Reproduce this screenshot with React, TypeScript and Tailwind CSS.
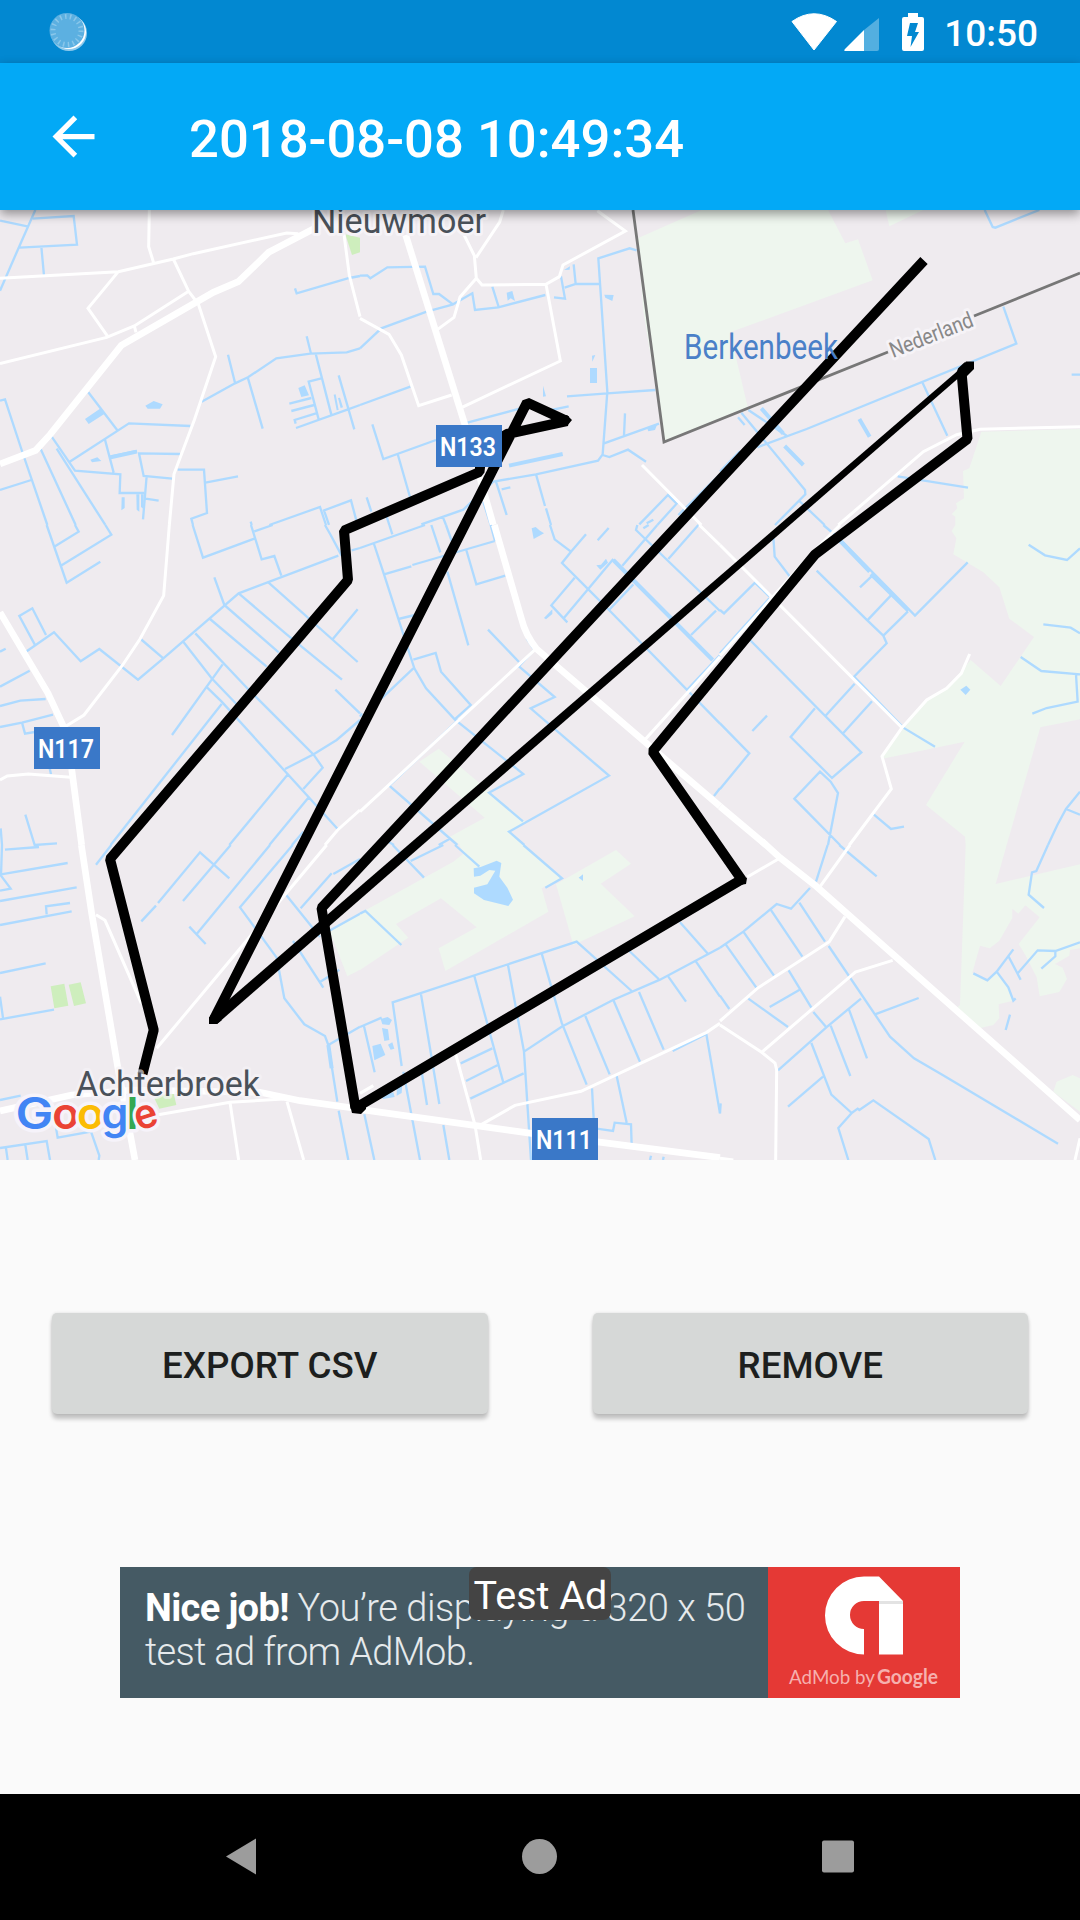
import React from "react";

type Tile = {
  x: number;
  y: number;
  green?: string;
  park?: string;
  pond?: string;
  water: string;
  canal?: string;
  lane?: string;
  road?: string;
  highway?: string;
};

// Each tile covers 360 x 320 px and is drawn at three units per pixel.
const tiles: Tile[] = [
  {
    x: 0,
    y: 205,
    park: "M1036 88L1080 98V142L1056 150Z",
    pond: "M255 642L302 610L314 626L266 657ZM271 764L292 757L304 768L276 772ZM895 549L914 541L927 571L904 576ZM1001 569L1007 568L1016 615L1010 616ZM1014 579L1020 578L1029 607L1022 609ZM365 877H374V909L364 916ZM409 868H418V920L410 914ZM423 868H431V912L423 906ZM436 602L461 588L488 598L480 611H443Z",
    water:
      "M106 15L64 110L0 257M0 47L82 64M98 41L221 33L231 119L59 128M124 125L132 212M0 587L15 583L70 750L142 960M0 855L94 825M265 562L352 676M571 663L387 655L208 771M155 695L225 797L361 808L359 864H432M170 731L316 960M122 732L227 960M315 704L341 803M328 755L411 738M540 747L417 745L431 813L517 821M440 813L429 943M432 880L476 887M533 794H612L621 924L574 941L579 960M616 833L714 814M808 960L960 906L978 960M987 960L972 916L1053 886L1070 950M752 950L755 960M605 590L705 535L744 517L829 460L931 446L1040 442L1080 430M684 449L705 533M744 520L788 671M920 394L933 446L947 446L994 629M1016 511L1063 673M888 669L1042 614L1080 600M964 520L926 530L956 643M868 596L934 579M874 618L943 600M887 656L884 645L948 625M885 250L890 265L1048 219L1080 213",
    canal: "M332 757L410 740",
    lane: "M448 15L446 125L461 174M0 220L355 200L520 162L580 146L860 84L895 86M355 200L264 310L323 394M520 162L566 259L595 297L647 455L583 645L522 807L508 960M0 476L320 397L403 363L566 259M403 363L408 382M1032 88L1048 211L1080 335",
    highway: "M0 777L107 736L150 689L364 421L640 262L715 230L806 142L940 72",
  },
  {
    x: 360,
    y: 205,
    green: "M833 100L1025 15H1080V640L914 708L850 320Z",
    pond: "M440 263L457 258L465 288L452 280L443 287ZM733 269L761 270L757 288L736 278ZM690 489H711V534H690ZM696 452L706 450L697 470ZM549 542L558 574L549 575ZM862 671L893 655L885 675L865 679ZM612 195L630 184L629 194Z",
    water:
      "M0 212L22 211L31 220L82 187L195 185L220 267H237L279 298L337 265L345 315L415 307L556 270M397 245L416 306M0 430L64 370L200 320L280 298M0 600L151 545M37 658L70 762L228 705M113 747L150 876M322 653L490 608M560 618L626 604M582 277L615 281L603 214M614 248L647 237H718M641 178L647 237M830 136L809 130L715 160L742 560L728 748L714 767L528 808L400 830L310 914L184 958M621 574L742 565L886 555M730 716L897 656M795 625L792 692M728 750L748 756L804 734L858 770M408 830L440 930M425 853L451 847M528 808L555 903M558 910L573 960M370 890L392 960M20 877L34 920M80 935L88 960M248 935L258 960M838 958L924 870L950 896L892 960M860 955L880 944M955 930L1080 808",
    canal: "M447 782L608 747",
    lane: "M430 15L419 51L348 158M310 85L343 152L349 220L366 240L558 238L598 215L609 180L796 78L712 17M558 238L601 468L306 607M349 220L300 276L282 337L232 374M0 340L87 388L124 450L176 602L275 570M846 780L1024 960",
    highway: "M137 90L312 650L400 960",
  },
  {
    x: 720,
    y: 205,
    green:
      "M0 15H324L376 115L414 103L458 226L30 382L83 605L0 640ZM497 15H610L508 64ZM784 680L1080 672V960H706V935L695 928L712 910L708 895L732 880L729 798L748 790Z",
    water:
      "M794 15L818 66L826 68L958 15M850 305L889 416L260 672L112 727M607 532L682 692M533 814L744 848M1055 509H1080M64 623L255 855L256 868L165 960M85 615L200 692M238 888L314 960M54 637L74 660M0 800L60 738",
    canal: "M124 610L190 686M418 642L449 695M194 723L250 780",
    lane: "M355 960L610 740L710 689L780 673L1080 665",
  },
  {
    x: 0,
    y: 525,
    water:
      "M140 0L200 173L301 110M225 0L236 20L165 64M316 0L334 29L185 121M78 380L162 322L242 409L298 372L414 464L490 400L716 205L1015 92M138 330L97 250L58 273L104 358M422 342L490 400M0 380L17 371M0 485L89 437M0 543L61 527L137 522M0 606L66 593L159 569M66 593L75 626L104 621M149 730L153 748M76 869L104 960L171 955M2 910L6 960M578 0L609 98L763 41M753 0L785 103L823 93L844 152M763 19L818 0M975 0L992 30L1025 92M1055 76L1080 69M643 157L673 240L836 382M630 282L800 425M586 325L744 492L941 689L968 728L910 792M551 352L635 460L712 540M668 418L516 630M621 487L665 530L1013 912M665 537L332 960M716 205L860 328L1026 464M805 172L1073 411M1073 253L996 345M1006 494L1080 565M1080 585L1010 645L941 688L855 732M862 750L688 960M925 818L808 960M910 920L876 960",
    lane: "M508 0L491 212L420 342L368 420L252 570L190 608M0 765L22 753L85 747L212 757M1080 855L1013 915L975 960",
    highway: "M0 262L144 505L192 608M215 732L245 960",
  },
  {
    x: 360,
    y: 525,
    green:
      "M178 710L236 671L496 890L445 920L493 960H300L270 935L374 878Z",
    pond: "M515 10L527 6L540 17L552 25L521 42ZM709 121L723 119L738 101L744 113L721 134ZM552 279L577 253L577 267L558 283Z",
    water:
      "M0 69L195 0M88 0L97 28M41 54L72 148L163 430L198 490L284 583L490 747L387 803L489 889M72 148L154 124M157 120L405 48M214 0L241 82M258 0L275 48M392 0L405 48M262 140L325 361M318 72L349 178L436 152M115 282L165 270M160 404L227 384L243 440L332 540L284 583M160 430L65 520M0 575L6 565M570 0L584 43L633 80L678 28M633 80L606 114L685 193L747 255L1080 596M644 158L574 241L622 292M760 102L611 280M713 46L746 9M787 122L892 0M832 0L828 15L1080 258M850 10L866 0M925 102L1015 0M747 255L820 178M993 330L1068 257M384 314L477 411M522 375L477 424L584 516L512 550L747 752L447 920L493 960M500 340L520 370M296 583L88 782L292 960M236 960L267 943M85 950L102 960M1080 390L980 496M1062 813L1080 790",
    canal: "M760 105L1058 405",
    lane: "M0 860L525 374M1080 395L856 643M1018 0L1080 60",
    highway: "M403 0L484 280Q496 330 530 372L1080 844",
  },
  {
    x: 720,
    y: 525,
    green:
      "M706 0H1080V583L961 607L860 960H737L735 935L618 840L734 650L495 700L484 694L620 525L680 490L752 405L842 483L942 336L868 281L838 187L790 142L700 88L709 40L695 18Z",
    pond: "M721 494L739 482L751 494L737 510Z",
    water:
      "M926 59L975 91L1041 105L1080 70M970 298L1052 308L1080 325M902 396L964 438L1080 448M1068 448L1073 530L980 549L937 566M160 35L164 95L210 155M310 0L360 42L585 272L743 112M420 187L457 152M290 137L442 286L490 332L500 355L402 455L550 608L645 665M513 211L442 286M564 259L490 332M90 345L424 682L336 759L212 636L285 550M404 476L316 573M456 529L368 626M0 255L12 265L105 173L148 214M148 220L0 385M0 595L88 685L0 792M97 618L141 572M324 960L354 804L332 770L300 740L223 821L360 960M461 868L513 912L552 905M984 960L1012 900L1038 852L1080 800M1038 852L1080 869",
    canal: "M355 42L449 140M453 147L565 257",
    lane: "M0 60L546 608M749 387L724 445L680 490L620 525L546 608L486 694L514 792L388 960M0 392L280 80L360 0",
    highway: "M0 844L138 960",
  },
  {
    x: 0,
    y: 845,
    park: "M152 424L193 416L205 482L163 490ZM206 419L242 412L258 475L222 483ZM463 760L520 740L529 780L478 791Z",
    green: "M990 260L1080 207V374L1042 394Z",
    water:
      "M15 14L117 6M6 0L3 92L32 131L0 137M3 88L203 54M0 168L230 127M0 240L215 199M140 208L138 184L210 174M0 384L137 355M0 455L9 519M0 523L162 494M0 765L62 752M334 0L288 59M424 229L468 182M474 174L600 22L688 100M692 0L549 168M810 0L590 267M568 245L617 297M878 0L720 187L830 338L853 460L913 538L975 573L985 600L1012 770M1016 797L1045 945M985 600L1080 545M858 149L960 276M879 288L970 428M995 85L902 190M1000 87L1080 42M980 262L1080 206M960 411L1018 374M0 909L140 888L150 945M18 910L23 945M76 900L83 945M165 830L173 878L273 860L298 932L296 945",
    canal: "M985 600L995 670",
    lane: "M980 0L850 155L470 610M288 209L315 226L424 475M440 815L690 772L850 762M690 772L716 945M861 770L911 945",
    highway: "M244 0L275 205L353 665L405 945M0 798L215 750L400 735L780 742L900 767L1080 792",
  },
  {
    x: 360,
    y: 845,
    green:
      "M0 205L280 50L312 25L298 0H490L606 100L545 130L565 200L256 378L236 310L350 247L243 160L108 237L145 278L0 375ZM588 118L768 15L813 56L722 116L824 214L640 300Z",
    pond: "M341 70L362 66L410 47L424 54L418 95L442 128L459 164L445 183L372 165L342 145V128L382 118L406 77L388 75L361 92L342 95ZM656 98L669 88V108ZM62 522L83 516L96 525L88 540L67 538ZM66 549L84 553L88 585L73 588ZM37 603L62 596L76 630L43 646ZM84 599L97 592L103 611L92 614ZM62 752L100 742L104 756L69 762ZM111 715L127 718L125 744L110 752Z",
    water:
      "M98 0L192 98M152 48L250 0M285 0L358 65M490 0L606 100L556 128M0 206L16 198L124 300M0 546L65 518M12 544L44 682M125 663L98 472L650 290L815 438M183 448L238 777M185 680L201 780M343 393L430 713M444 360L492 620L605 545L759 465L900 404L1080 308M545 325L605 533L680 719M676 513L749 688M760 465L840 650M837 441L911 614M925 395L978 470M1008 350L1080 455M960 232L1045 328M808 318L896 402M492 620L513 945M302 655L397 610M318 708L412 661M331 761L491 685M130 680L180 945M13 808L43 945M250 840L268 945M696 730L701 820L703 850L759 858L764 833L813 838L815 900M770 693L800 833M873 932L870 945M911 935L909 945M938 618L1039 567L1080 805",
    lane: "M285 620L345 840L362 945M365 838L465 781L663 739L1040 562L1080 535M0 745L40 722",
    highway: "M0 793L520 866L1080 938",
  },
  {
    x: 720,
    y: 845,
    green:
      "M737 0H860L827 117L1080 58V310L1050 315L1048 332L1005 357L1028 368L1041 402L1018 441L959 454L950 397L916 330L896 297L959 217L916 181L895 206L877 191V219L838 287L809 310L780 302L757 383L803 410L830 382L864 430L880 467L836 478L838 520L820 540L782 549L712 487L720 480ZM1000 740L1010 710L1058 690L1080 700V800Z",
    water:
      "M0 308L70 260L170 177L213 191L270 129M288 110L323 0M358 0L470 94M17 298L109 428M70 260L162 392M150 191L247 335M238 173L315 290M326 303L510 575L582 640L668 690L1014 896M0 452L28 492M85 461L204 546M206 376L274 488M280 501L319 547M149 486L239 434M174 676L319 547L423 461M463 509L596 459M387 494L441 640M332 542L391 693M274 594L334 749L395 804L355 849L385 945M204 785L309 695M395 804L413 791L418 795L460 766L626 882L646 945M0 805L2 775M984 0L949 78L936 82L926 149L972 189M760 385L802 406L830 380L880 313M866 335L902 404M892 386L953 316L1006 318L1080 292M1006 320V334L964 371M830 380L865 427L880 467L887 460M870 509L857 555",
    lane: "M82 96L175 42M390 0L300 125M375 215L328 290L112 430L0 528M518 346L406 381L125 622M0 540L125 622L165 654L170 675L167 945M0 940L40 945M1080 880L1065 945",
    highway: "M125 -12L180 38L290 125L1080 825",
  },
];

function MapTile({ t }: { t: Tile }) {
  return (
    <g transform={`translate(${t.x} ${t.y}) scale(0.33333)`} fill="none">
      <path d={t.green} fill={t.green ? "#eef6ee" : "none"} />
      <path d={t.park} fill={t.park ? "#ceeebd" : "none"} />
      <path d={t.pond} fill={t.pond ? "#aedaff" : "none"} />
      <path d={t.water} stroke="#aedaff" strokeWidth="7" />
      <path d={t.canal} stroke="#aedaff" strokeWidth="12" />
      <path d={t.lane} stroke="#fff" strokeWidth="9" />
      <path d={t.highway} stroke="#fff" strokeWidth="20" />
    </g>
  );
}

function Shield({ x, y, label }: { x: number; y: number; label: string }) {
  return (
    <g>
      <rect x={x} y={y} width="66" height="42" fill="#3a78c8" />
      <text x={x + 4} y={y + 31} fontSize="25" fontWeight="600" fill="#fff" textLength="56" lengthAdjust="spacingAndGlyphs">
        {label}
      </text>
    </g>
  );
}

const logo: [string, number, string, number][] = [
  ["G", 15.5, "#4285f4", 38],
  ["o", 52.3, "#ea4335", 27],
  ["o", 77, "#fbbc05", 27],
  ["g", 101.5, "#4285f4", 27],
  ["l", 126.5, "#34a853", 12],
];

function RouteMap() {
  return (
    <svg viewBox="0 210 1080 950" className="block h-[950px] w-full bg-[#efebef] font-[Roboto,sans-serif]">
      {tiles.map((t) => (
        <MapTile key={`${t.x}-${t.y}`} t={t} />
      ))}
      <path d="M633 210L664 442L888 352M974 316L1080 273" fill="none" stroke="#777" strokeWidth="2.8" />
      <g fill="none" stroke="#000" strokeWidth="10" strokeLinejoin="bevel">
        <path d="M924 260.5L321.5 908L355.5 1108L741.5 879.5L652.5 751.5L815 554.5L967.5 439L961.5 372L968 366" />
        <path d="M213.5 1020L527 402.5L567 421L507 434L482 449L479.5 472L344 530.5L348 580L110 859L153.7 1030L142.5 1074" />
      </g>
      <path d="M961 368L210 1016L217 1024L966 371.5Z" />
      <path d="M958 371L966 361.5H974V369L966 377ZM209 1017V1024H217L222 1020ZM561 417L567 415L572 420L567 426ZM350 1105L352 1113L361 1114L366 1109V1103ZM740 874L747 878L746 884L740 885Z" />

      <g stroke="#f6f3f7" strokeWidth="6" strokeLinejoin="round" paintOrder="stroke">
        <text x="312" y="233" fontSize="34.5" fill="#4a5159" textLength="174" lengthAdjust="spacingAndGlyphs">Nieuwmoer</text>
        <text x="76" y="1096" fontSize="35.5" fill="#4a5159" strokeOpacity=".65" textLength="184" lengthAdjust="spacingAndGlyphs">Achterbroek</text>
        <text transform="translate(893 358) rotate(-21.4)" fontSize="22" fill="#888" textLength="88" lengthAdjust="spacingAndGlyphs" textRendering="geometricPrecision">Nederland</text>
      </g>
      <text x="684" y="359" fontSize="35" fill="#4a80c8" textLength="154" lengthAdjust="spacingAndGlyphs">Berkenbeek</text>

      <Shield x={436} y={425} label="N133" />
      <Shield x={34} y={727} label="N117" />
      <Shield x={532} y={1118} label="N111" />

      <g fontFamily="Inter, sans-serif" fontSize="43.5" fontWeight="600" stroke="#f6f3fa" strokeWidth="7" strokeLinejoin="round" paintOrder="stroke">
        {logo.map(([ch, x, fill, w]) => (
          <text key={x} x={x} y="1128.5" fill={fill} textLength={w} lengthAdjust="spacingAndGlyphs">
            {ch}
          </text>
        ))}
        <text transform="translate(138.5 1131) rotate(-18)" fontSize="41" fill="#ea4335" textLength="23" lengthAdjust="spacingAndGlyphs">e</text>
      </g>
    </svg>
  );
}

function StatusBar() {
  return (
    <div className="flex h-[63px] items-center bg-[#0288d1] pr-[42px] pl-[46px] text-white">
      <svg viewBox="46 11 42 42" className="mt-px size-[42px]">
        <circle cx="69" cy="33" r="18" fill="#8fcaec" />
        <circle cx="69" cy="32" r="17" fill="#fff" />
        <circle cx="67" cy="30.500" r="17.500" fill="#5cb0e1" />
        <circle cx="67" cy="30.500" r="14" fill="none" stroke="#8ac7ea" strokeWidth="5" strokeDasharray="1.500 3.387" />
      </svg>
      <svg viewBox="790 9 136 44" className="ml-auto h-[44px] w-[136px]">
        <path d="M814 49L792 20.500Q814 5 836.500 20.500Z" fill="#fff" stroke="#fff" strokeLinejoin="round" />
        <path d="M879 17V48Q879 50 877 50H864V29Z" fill="#53afe0" />
        <path d="M864 29V50H846Q843 50 845 48Z" fill="#fff" />
        <path d="M908 12H918V16H922Q924 16 924 18V48Q924 50 922 50H904Q902 50 902 48V18Q902 16 904 16H908Z" fill="#fff" />
        <path d="M910 22H918L915 31H919L910.500 46L912 35H907Z" fill="#0288d1" />
      </svg>
      <span className="ml-[18px] pt-[3px] text-[37px] leading-none font-medium">10:50</span>
    </div>
  );
}

function ActionButton({ children }: { children: React.ReactNode }) {
  return (
    <button className="h-[101px] flex-1 rounded-[5px] bg-[#d6d8d7] pt-1 text-[36.75px] font-medium text-[#1d1f1e] shadow-[0_5px_4px_rgba(0,0,0,0.22),0_0_3px_rgba(0,0,0,0.12)]">
      {children}
    </button>
  );
}

function AdBanner() {
  return (
    <div className="relative mx-auto mt-[153px] flex h-[131px] w-[840px] bg-[#455a64]">
      <div className="w-[648px] pt-[19px] pl-[25px] text-[38px] leading-[44px] font-light whitespace-nowrap text-[#e6eaec]">
        <div className="tracking-[-0.45px]">
          <b className="font-bold tracking-[-0.65px] text-white">Nice job!</b> You’re displaying a 320 x 50
        </div>
        <div className="tracking-[-0.65px]">test ad from AdMob.</div>
      </div>
      <svg viewBox="768 1567 192 131" className="h-[131px] w-[192px] bg-[#e53935]">
        <path d="M879 1576.500H864A39 39 0 0 0 864 1654.500V1629A14 14 0 0 1 864 1601H879V1654.500H903V1601Z" fill="#fff" />
        <path d="M879 1601H903V1604H879Z" fill="#e3e3e3" />
        <text x="789" y="1684" fontFamily="Lato, sans-serif" fontSize="20" fill="#f6b0ae" textLength="86" lengthAdjust="spacingAndGlyphs">
          AdMob by
        </text>
        <text x="877" y="1684" fontFamily="Lato, sans-serif" fontSize="20" fontWeight="700" fill="#f6b0ae" textLength="61" lengthAdjust="spacingAndGlyphs">
          Google
        </text>
      </svg>
      <span className="absolute top-0 left-[349px] flex h-[53px] w-[142px] items-center justify-center rounded-[8px] bg-[#444] pt-1 pl-px text-[39.5px] whitespace-nowrap text-white">
        Test Ad
      </span>
    </div>
  );
}

export default function App() {
  return (
    <div className="flex h-[1920px] w-[1080px] flex-col overflow-hidden bg-[#fafafa] font-[Roboto,sans-serif]">
      <StatusBar />
      <header className="relative z-10 flex h-[147px] items-center bg-[#03a9f6] pl-[42px] text-white shadow-[0_4px_10px_rgba(0,0,0,0.4)]">
        <svg viewBox="0 0 24 24" className="size-[63px]" fill="currentColor">
          <path d="M20 11H7.830l5.590-5.590L12 4l-8 8 8 8 1.410-1.410L7.830 13H20v-2z" />
        </svg>
        <h1 className="ml-[84px] pt-[5px] text-[52.600px] leading-none font-medium whitespace-nowrap">2018-08-08 10:49:34</h1>
      </header>
      <RouteMap />
      <div className="mt-[153px] flex gap-[105px] px-[52px]">
        <ActionButton>EXPORT CSV</ActionButton>
        <ActionButton>REMOVE</ActionButton>
      </div>
      <AdBanner />
      <nav className="mt-auto h-[126px] bg-black">
        <svg viewBox="0 1794 1080 126" className="h-full w-full" fill="#9c9c9c">
          <path d="M256 1838.500V1874.500L226 1856.500Z" />
          <circle cx="539.500" cy="1856.500" r="17.500" />
          <rect x="822" y="1840.500" width="32" height="32" rx="2" />
        </svg>
      </nav>
    </div>
  );
}
